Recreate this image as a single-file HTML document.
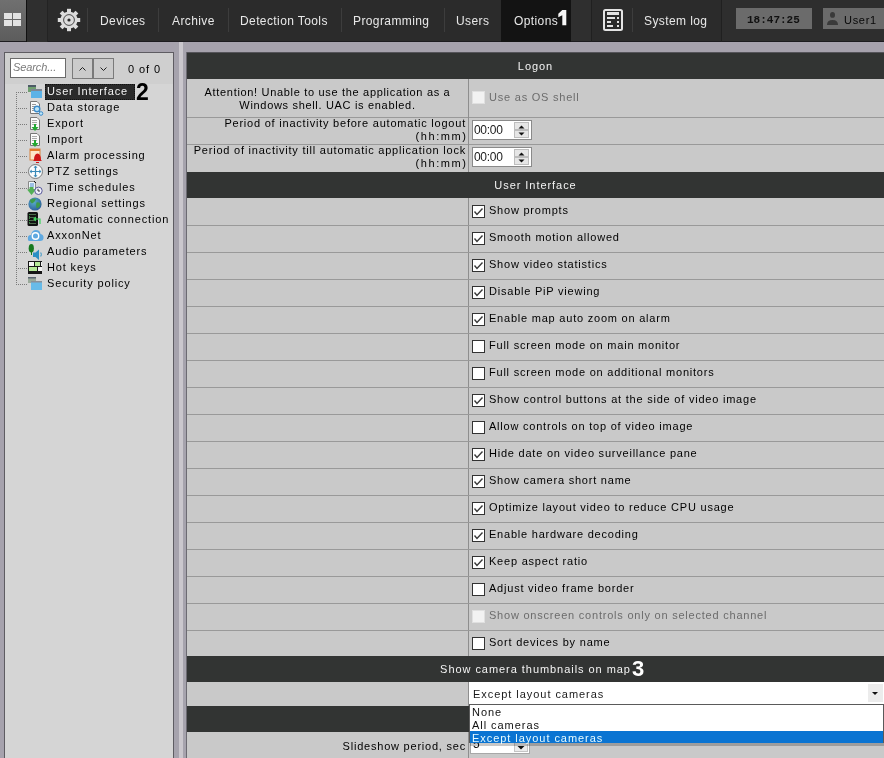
<!DOCTYPE html>
<html><head><meta charset="utf-8">
<style>
*{margin:0;padding:0;box-sizing:border-box}
html,body{-webkit-font-smoothing:antialiased;width:884px;height:758px;overflow:hidden;background:#a6a2ad;font-family:"Liberation Sans",sans-serif;font-size:11px;color:#1a1a1a}
.a{position:absolute}
#top{left:0;top:0;width:884px;height:42px;background:#2b2b2b}
.nav{position:absolute;top:14px;color:#e8e8e8;font-size:12px;white-space:nowrap;letter-spacing:0.4px}
.sep{position:absolute;top:8px;width:1px;height:24px;background:#3d3d3d}
#lp{left:4px;top:52px;width:170px;height:706px;background:#d5d5d5;border:1px solid #5e5c62;border-bottom:none}
#tb{position:absolute;left:0;top:0;width:168px;height:31px;background:#cfcfcf}
.ti{position:absolute;left:42px;height:16px;white-space:nowrap;font-size:11px;line-height:16px;letter-spacing:0.85px;color:#000}
.hd{position:absolute;left:187px;width:697px;background:#323433;color:#f4f4f4;text-align:center;font-size:11px;letter-spacing:0.95px}
.hl{position:absolute;left:187px;width:697px;height:1px;background:#999}
.vl{position:absolute;left:468px;width:1px;background:#8e8e8e}
.cb{position:absolute;left:472px;width:13px;height:13px;background:#fff;border:1px solid #333}
.ck{position:absolute;left:-1px;top:-1px}
.cbd{position:absolute;left:472px;width:13px;height:13px;background:#f2f2f2;border:1px solid #e0e0e0}
.l2{position:absolute;white-space:nowrap;letter-spacing:0.78px;font-size:11px;line-height:13px;color:#000}
.lb{position:absolute;left:489px;white-space:nowrap;letter-spacing:0.78px;font-size:11px;line-height:13px;color:#000}
</style></head><body><div id="wrap" style="position:absolute;left:0;top:0;width:884px;height:758px;will-change:transform">
<div id="top" class="a">
 <div class="a" style="left:0;top:0;width:26px;height:42px;background:linear-gradient(#707070,#5c5c5c)"></div>
 <div class="a" style="left:0;top:41px;width:884px;height:1px;background:#1d1c20"></div>
 <div class="a" style="left:26px;top:0;width:1px;height:42px;background:#111"></div>
 <div class="a" style="left:27px;top:0;width:20px;height:42px;background:#2f2f2f"></div>
 <div class="a" style="left:47px;top:0;width:1px;height:42px;background:#232323"></div>
 <div class="a" style="left:4px;top:13px;width:8px;height:6px;background:#e2e2e2"></div>
 <div class="a" style="left:13px;top:13px;width:8px;height:6px;background:#e2e2e2"></div>
 <div class="a" style="left:4px;top:20px;width:8px;height:6px;background:#e2e2e2"></div>
 <div class="a" style="left:13px;top:20px;width:8px;height:6px;background:#e2e2e2"></div>
 <svg class="a" style="left:56px;top:7px" width="26" height="26" viewBox="-13 -13 26 26">
  <g fill="#dcdcdc">
   <circle r="8.6"/>
   <rect x="-2" y="-11.2" width="4" height="22.4"/>
   <rect x="-2" y="-11.2" width="4" height="22.4" transform="rotate(45)"/>
   <rect x="-2" y="-11.2" width="4" height="22.4" transform="rotate(90)"/>
   <rect x="-2" y="-11.2" width="4" height="22.4" transform="rotate(135)"/>
  </g>
  <circle r="5.4" fill="none" stroke="#3a3a3a" stroke-width="0.9"/>
  <circle r="1.6" fill="#2a2a2a"/>
 </svg>
 <div class="sep" style="left:87px"></div>
 <div class="nav" style="left:100px">Devices</div>
 <div class="sep" style="left:158px"></div>
 <div class="nav" style="left:172px">Archive</div>
 <div class="sep" style="left:228px"></div>
 <div class="nav" style="left:240px">Detection Tools</div>
 <div class="sep" style="left:341px"></div>
 <div class="nav" style="left:353px">Programming</div>
 <div class="sep" style="left:444px"></div>
 <div class="nav" style="left:456px">Users</div>
 <div class="a" style="left:501px;top:0;width:70px;height:42px;background:#131313"></div>
 <div class="nav" style="left:514px">Options</div>
 <svg class="a" style="left:555px;top:5px" width="15" height="25"><path d="M7.3 5 H11.3 V20.2 H7.3 V10.3 L3.3 12.2 V8.7 Z" fill="#f6f6f6"/></svg>
 <div class="a" style="left:571px;top:0;width:20px;height:41px;background:#2f2f2f"></div>
 <div class="a" style="left:591px;top:0;width:1px;height:42px;background:#202020"></div>
 <svg class="a" style="left:603px;top:9px" width="21" height="23">
  <rect x="1" y="1" width="18" height="20" rx="1.5" fill="none" stroke="#e4e4e4" stroke-width="2"/>
  <g fill="#e4e4e4"><rect x="4" y="3" width="12" height="3"/><rect x="4" y="8" width="8" height="2"/><rect x="14" y="8" width="2" height="2"/>
  <rect x="4" y="12" width="4" height="2"/><rect x="14" y="12" width="2" height="2"/><rect x="4" y="16" width="6" height="2"/><rect x="14" y="16" width="2" height="2"/></g>
 </svg>
 <div class="sep" style="left:632px"></div>
 <div class="nav" style="left:644px">System log</div>
 <div class="a" style="left:722px;top:0;width:162px;height:41px;background:#2e2e2e"></div>
 <div class="a" style="left:721px;top:0;width:1px;height:42px;background:#202020"></div>
 <div class="a" style="left:736px;top:8px;width:76px;height:21px;background:#6b6b6b"></div>
 <div class="a" style="left:747px;top:14px;font-family:'Liberation Mono',monospace;font-size:11px;font-weight:bold;color:#111">18:47:25</div>
 <div class="a" style="left:823px;top:8px;width:61px;height:21px;background:#6b6b6b"></div>
 <svg class="a" style="left:823px;top:8px" width="20" height="21"><ellipse cx="9.5" cy="6.9" rx="2.5" ry="2.9" fill="#3a3a3a"/><path d="M4 17 Q4 12 9.5 12 Q15 12 15 17 Z" fill="#3a3a3a"/></svg>
 <div class="a" style="left:844px;top:14px;font-size:11px;color:#080808;letter-spacing:0.7px">User1</div>
</div>
<div id="lp" class="a">
 <div id="tb"></div>
 <div class="a" style="left:5px;top:5px;width:56px;height:20px;background:#fff;border:1px solid #6a6a6a"></div>
 <div class="a" style="left:8px;top:8px;font-style:italic;color:#7a7a7a;font-size:11px;letter-spacing:-0.1px">Search...</div>
 <div class="a" style="left:67px;top:5px;width:21px;height:21px;background:#cbcbcb;border:1px solid #7a7a7a"></div>
 <div class="a" style="left:88px;top:5px;width:21px;height:21px;background:#cbcbcb;border:1px solid #7a7a7a"></div>
 <svg class="a" style="left:67px;top:5px" width="42" height="21"><path d="M7.5 12.5 L10.5 9.5 L13.5 12.5" fill="none" stroke="#222" stroke-width="1"/><path d="M28.5 9.5 L31.5 12.5 L34.5 9.5" fill="none" stroke="#222" stroke-width="1"/></svg>
 <div class="a" style="left:123px;top:10px;font-size:11px;color:#000;letter-spacing:0.9px">0 of 0</div>
 <div class="a" style="left:40px;top:31px;width:90px;height:16px;background:#2a2a2a;border:1px dotted #111"></div>
 <div class="a" style="left:131px;top:28px;font-size:23px;font-weight:bold;color:#000;line-height:22px">2</div>
 <div class="ti" style="top:30px;color:#f2f2f2">User Interface</div>
 <div class="ti" style="top:46px;color:#000">Data storage</div>
 <div class="ti" style="top:62px;color:#000">Export</div>
 <div class="ti" style="top:78px;color:#000">Import</div>
 <div class="ti" style="top:94px;color:#000">Alarm processing</div>
 <div class="ti" style="top:110px;color:#000">PTZ settings</div>
 <div class="ti" style="top:126px;color:#000">Time schedules</div>
 <div class="ti" style="top:142px;color:#000">Regional settings</div>
 <div class="ti" style="top:158px;color:#000">Automatic connection</div>
 <div class="ti" style="top:174px;color:#000">AxxonNet</div>
 <div class="ti" style="top:190px;color:#000">Audio parameters</div>
 <div class="ti" style="top:206px;color:#000">Hot keys</div>
 <div class="ti" style="top:222px;color:#000">Security policy</div>
</div>
<svg class="a" style="left:0;top:0" width="180" height="300">
 <g fill="#7a7a7a">
<rect x="16" y="92" width="1" height="1"/><rect x="16" y="94" width="1" height="1"/><rect x="16" y="96" width="1" height="1"/><rect x="16" y="98" width="1" height="1"/><rect x="16" y="100" width="1" height="1"/><rect x="16" y="102" width="1" height="1"/><rect x="16" y="104" width="1" height="1"/><rect x="16" y="106" width="1" height="1"/><rect x="16" y="108" width="1" height="1"/><rect x="16" y="110" width="1" height="1"/><rect x="16" y="112" width="1" height="1"/><rect x="16" y="114" width="1" height="1"/><rect x="16" y="116" width="1" height="1"/><rect x="16" y="118" width="1" height="1"/><rect x="16" y="120" width="1" height="1"/><rect x="16" y="122" width="1" height="1"/><rect x="16" y="124" width="1" height="1"/><rect x="16" y="126" width="1" height="1"/><rect x="16" y="128" width="1" height="1"/><rect x="16" y="130" width="1" height="1"/><rect x="16" y="132" width="1" height="1"/><rect x="16" y="134" width="1" height="1"/><rect x="16" y="136" width="1" height="1"/><rect x="16" y="138" width="1" height="1"/><rect x="16" y="140" width="1" height="1"/><rect x="16" y="142" width="1" height="1"/><rect x="16" y="144" width="1" height="1"/><rect x="16" y="146" width="1" height="1"/><rect x="16" y="148" width="1" height="1"/><rect x="16" y="150" width="1" height="1"/><rect x="16" y="152" width="1" height="1"/><rect x="16" y="154" width="1" height="1"/><rect x="16" y="156" width="1" height="1"/><rect x="16" y="158" width="1" height="1"/><rect x="16" y="160" width="1" height="1"/><rect x="16" y="162" width="1" height="1"/><rect x="16" y="164" width="1" height="1"/><rect x="16" y="166" width="1" height="1"/><rect x="16" y="168" width="1" height="1"/><rect x="16" y="170" width="1" height="1"/><rect x="16" y="172" width="1" height="1"/><rect x="16" y="174" width="1" height="1"/><rect x="16" y="176" width="1" height="1"/><rect x="16" y="178" width="1" height="1"/><rect x="16" y="180" width="1" height="1"/><rect x="16" y="182" width="1" height="1"/><rect x="16" y="184" width="1" height="1"/><rect x="16" y="186" width="1" height="1"/><rect x="16" y="188" width="1" height="1"/><rect x="16" y="190" width="1" height="1"/><rect x="16" y="192" width="1" height="1"/><rect x="16" y="194" width="1" height="1"/><rect x="16" y="196" width="1" height="1"/><rect x="16" y="198" width="1" height="1"/><rect x="16" y="200" width="1" height="1"/><rect x="16" y="202" width="1" height="1"/><rect x="16" y="204" width="1" height="1"/><rect x="16" y="206" width="1" height="1"/><rect x="16" y="208" width="1" height="1"/><rect x="16" y="210" width="1" height="1"/><rect x="16" y="212" width="1" height="1"/><rect x="16" y="214" width="1" height="1"/><rect x="16" y="216" width="1" height="1"/><rect x="16" y="218" width="1" height="1"/><rect x="16" y="220" width="1" height="1"/><rect x="16" y="222" width="1" height="1"/><rect x="16" y="224" width="1" height="1"/><rect x="16" y="226" width="1" height="1"/><rect x="16" y="228" width="1" height="1"/><rect x="16" y="230" width="1" height="1"/><rect x="16" y="232" width="1" height="1"/><rect x="16" y="234" width="1" height="1"/><rect x="16" y="236" width="1" height="1"/><rect x="16" y="238" width="1" height="1"/><rect x="16" y="240" width="1" height="1"/><rect x="16" y="242" width="1" height="1"/><rect x="16" y="244" width="1" height="1"/><rect x="16" y="246" width="1" height="1"/><rect x="16" y="248" width="1" height="1"/><rect x="16" y="250" width="1" height="1"/><rect x="16" y="252" width="1" height="1"/><rect x="16" y="254" width="1" height="1"/><rect x="16" y="256" width="1" height="1"/><rect x="16" y="258" width="1" height="1"/><rect x="16" y="260" width="1" height="1"/><rect x="16" y="262" width="1" height="1"/><rect x="16" y="264" width="1" height="1"/><rect x="16" y="266" width="1" height="1"/><rect x="16" y="268" width="1" height="1"/><rect x="16" y="270" width="1" height="1"/><rect x="16" y="272" width="1" height="1"/><rect x="16" y="274" width="1" height="1"/><rect x="16" y="276" width="1" height="1"/><rect x="16" y="278" width="1" height="1"/><rect x="16" y="280" width="1" height="1"/><rect x="16" y="282" width="1" height="1"/><rect x="16" y="284" width="1" height="1"/><rect x="18" y="92" width="1" height="1"/><rect x="20" y="92" width="1" height="1"/><rect x="22" y="92" width="1" height="1"/><rect x="24" y="92" width="1" height="1"/><rect x="26" y="92" width="1" height="1"/><rect x="18" y="108" width="1" height="1"/><rect x="20" y="108" width="1" height="1"/><rect x="22" y="108" width="1" height="1"/><rect x="24" y="108" width="1" height="1"/><rect x="26" y="108" width="1" height="1"/><rect x="18" y="124" width="1" height="1"/><rect x="20" y="124" width="1" height="1"/><rect x="22" y="124" width="1" height="1"/><rect x="24" y="124" width="1" height="1"/><rect x="26" y="124" width="1" height="1"/><rect x="18" y="140" width="1" height="1"/><rect x="20" y="140" width="1" height="1"/><rect x="22" y="140" width="1" height="1"/><rect x="24" y="140" width="1" height="1"/><rect x="26" y="140" width="1" height="1"/><rect x="18" y="156" width="1" height="1"/><rect x="20" y="156" width="1" height="1"/><rect x="22" y="156" width="1" height="1"/><rect x="24" y="156" width="1" height="1"/><rect x="26" y="156" width="1" height="1"/><rect x="18" y="172" width="1" height="1"/><rect x="20" y="172" width="1" height="1"/><rect x="22" y="172" width="1" height="1"/><rect x="24" y="172" width="1" height="1"/><rect x="26" y="172" width="1" height="1"/><rect x="18" y="188" width="1" height="1"/><rect x="20" y="188" width="1" height="1"/><rect x="22" y="188" width="1" height="1"/><rect x="24" y="188" width="1" height="1"/><rect x="26" y="188" width="1" height="1"/><rect x="18" y="204" width="1" height="1"/><rect x="20" y="204" width="1" height="1"/><rect x="22" y="204" width="1" height="1"/><rect x="24" y="204" width="1" height="1"/><rect x="26" y="204" width="1" height="1"/><rect x="18" y="220" width="1" height="1"/><rect x="20" y="220" width="1" height="1"/><rect x="22" y="220" width="1" height="1"/><rect x="24" y="220" width="1" height="1"/><rect x="26" y="220" width="1" height="1"/><rect x="18" y="236" width="1" height="1"/><rect x="20" y="236" width="1" height="1"/><rect x="22" y="236" width="1" height="1"/><rect x="24" y="236" width="1" height="1"/><rect x="26" y="236" width="1" height="1"/><rect x="18" y="252" width="1" height="1"/><rect x="20" y="252" width="1" height="1"/><rect x="22" y="252" width="1" height="1"/><rect x="24" y="252" width="1" height="1"/><rect x="26" y="252" width="1" height="1"/><rect x="18" y="268" width="1" height="1"/><rect x="20" y="268" width="1" height="1"/><rect x="22" y="268" width="1" height="1"/><rect x="24" y="268" width="1" height="1"/><rect x="26" y="268" width="1" height="1"/><rect x="18" y="284" width="1" height="1"/><rect x="20" y="284" width="1" height="1"/><rect x="22" y="284" width="1" height="1"/><rect x="24" y="284" width="1" height="1"/><rect x="26" y="284" width="1" height="1"/>
 </g>

 <!-- 1 user interface -->
 <rect x="28" y="85" width="8" height="7" fill="#6f9f6f"/><rect x="28" y="85" width="8" height="2" fill="#4d5a66"/>
 <rect x="31" y="89" width="11" height="9" fill="#5cb2e6"/><rect x="31" y="89" width="11" height="2" fill="#7d8592"/>
 <!-- 2 data storage -->
 <path d="M30.5 101.5 H37 L39.5 104 V113.5 H30.5 Z" fill="#fafafa" stroke="#777"/>
 <path d="M32 104.5h4M32 106.5h4M32 108.5h3M32 110.5h3" stroke="#999" stroke-width="1"/>
 <circle cx="37" cy="109" r="2.8" fill="#bfe6f8" stroke="#3b8ccc" stroke-width="1.4"/>
 <circle cx="41" cy="113.5" r="1.8" fill="#bfe6f8" stroke="#3b8ccc" stroke-width="1"/>
 <!-- 3 export -->
 <path d="M30.5 117.5 H37 L39.5 120 V129.5 H30.5 Z" fill="#fafafa" stroke="#777"/>
 <path d="M32 120.5h5M32 122.5h5M32 124.5h5" stroke="#aaa" stroke-width="1"/>
 <path d="M34 124 h2 v3 h2.5 l-3.5 4 l-3.5 -4 h2.5z" fill="#22a832"/>
 <!-- 4 import -->
 <path d="M30.5 133.5 H37 L39.5 136 V145.5 H30.5 Z" fill="#fafafa" stroke="#777"/>
 <path d="M32 136.5h5M32 138.5h5M32 140.5h5" stroke="#aaa" stroke-width="1"/>
 <path d="M34 140 h2 v3 h2.5 l-3.5 4 l-3.5 -4 h2.5z" fill="#22a832"/>
 <!-- 5 alarm -->
 <rect x="30" y="149" width="10" height="11" fill="#fde7c8" stroke="#d9823c" stroke-width="1"/>
 <rect x="30" y="149" width="10" height="2" fill="#e07a2a"/>
 <path d="M34 160 Q34 154 37.5 153.5 Q41 154 41 160 L42 161 H33 Z" fill="#d01818"/>
 <rect x="36" y="162" width="3" height="1" fill="#d01818"/>
 <!-- 6 PTZ -->
 <circle cx="35.5" cy="171.5" r="7" fill="#fafcfd" stroke="#7a7a7a" stroke-width="1"/>
 <path d="M35.5 166.5v10M30.5 171.5h10" stroke="#3a8ab8" stroke-width="1.2"/>
 <path d="M35.5 165.5l-2 2.2h4zM35.5 177.5l-2 -2.2h4zM29.5 171.5l2.2 -2v4zM41.5 171.5l-2.2 -2v4z" fill="#3a8ab8"/>
 <!-- 7 time schedules -->
 <path d="M28.5 181.5 H34 L35.5 183 V189.5 H28.5 Z" fill="#eef6fa" stroke="#8a8a8a"/>
 <path d="M34 181 L36 183" stroke="#111" stroke-width="1"/>
 <path d="M30 184h4M30 186h4" stroke="#4a8ad0" stroke-width="1"/>
 <path d="M29.5 187 h4 v2.5 h2.5 l-4.5 5.5 l-4.5 -5.5 h2.5z" fill="#52b056"/>
 <circle cx="38.5" cy="190.8" r="3.7" fill="#f0f0fa" stroke="#5a5a9a" stroke-width="1"/>
 <path d="M38 188.8v2.2h2" stroke="#222" stroke-width="0.9" fill="none"/>
 <!-- 8 globe -->
 <defs><radialGradient id="gl" cx="0.4" cy="0.35" r="0.7"><stop offset="0" stop-color="#5ab0c8"/><stop offset="1" stop-color="#2a5a9a"/></radialGradient></defs>
 <circle cx="35" cy="204" r="6.6" fill="url(#gl)"/>
 <path d="M30 200 Q33 197.5 36 199 Q35 202 32 203.5 Q30 203 30 200Z M36.5 202.5 Q39.5 201.5 40.5 204.5 Q39 208.5 36.5 208 Q35.5 205.5 36.5 202.5Z" fill="#3e9a4a"/>
 <!-- 9 automatic connection -->
 <rect x="27.5" y="212" width="10.5" height="14" rx="1.5" fill="#121212"/>
 <path d="M29 214.5h7M29 217.5h7M29 220.5h7M29 223.5h7" stroke="#4a6a4a" stroke-width="1"/>
 <path d="M29.5 214v10" stroke="#3aa84a" stroke-width="0.8" stroke-dasharray="1 1"/>
 <path d="M34 219h6v5" stroke="#3ad25a" stroke-width="1.2" fill="none"/>
 <path d="M33 219l3 -2.5v5z" fill="#3ad25a"/>
 <!-- 10 axxonnet -->
 <path d="M28 240 Q27 235 31 235 Q32 230 36 230 Q40 230 40.5 234 Q44 234.5 43.5 238.5 Q43 241 40 241 H30 Q28 241 28 240Z" fill="#5ea8e0"/>
 <circle cx="35.5" cy="236" r="3.2" fill="none" stroke="#fff" stroke-width="1.4"/>
 <!-- 11 audio -->
 <ellipse cx="31.3" cy="248.3" rx="2.6" ry="4.3" fill="#17791f"/>
 <rect x="31" y="252" width="1" height="3" fill="#17791f"/>
 <path d="M33 252.5 h2.5 l3.5 -3 v10.5 l-3.5 -3 h-2.5z" fill="#2b8fc4"/>
 <path d="M40.8 252.5 q1 2 0 4" stroke="#2b8fc4" stroke-width="1" fill="none"/>
 <!-- 12 hot keys -->
 <rect x="28" y="261" width="14" height="13" fill="#161616"/>
 <rect x="29" y="262" width="5" height="4" fill="#f4f4f4"/><rect x="35" y="262" width="5" height="4" fill="#b6ea98"/><rect x="41" y="262" width="1" height="4" fill="#f4f4f4"/>
 <rect x="29" y="267" width="8" height="4" fill="#b6ea98"/><rect x="38" y="267" width="4" height="4" fill="#f4f4f4"/>
 <!-- 13 security -->
 <rect x="28" y="277" width="8" height="6" fill="#9aaa9a"/><rect x="28" y="277" width="8" height="1.5" fill="#5a6470"/>
 <rect x="31" y="281" width="11" height="9" fill="#68bbe8"/><rect x="31" y="281" width="11" height="1.5" fill="#8a9098"/>
</svg>
<div id="tbl">
<div class="a" style="left:174px;top:42px;width:12px;height:716px;background:#a6a3ad"></div>
<div class="a" style="left:179px;top:42px;width:4px;height:716px;background:#cac7cd"></div>
<div class="a" style="left:186px;top:52px;width:1px;height:706px;background:#6c6a72"></div>
<div class="a" style="left:187px;top:52px;width:697px;height:1px;background:#55545a"></div>
<div class="a" style="left:187px;top:53px;width:697px;height:705px;background:#c9c9c9"></div>
<div class="hd" style="top:53px;height:26px;line-height:26px">Logon</div>
<div class="hl" style="top:117px"></div>
<div class="hl" style="top:144px"></div>
<div class="vl" style="top:79px;height:93px"></div>
<div class="l2" style="left:187px;width:281px;top:86px;text-align:center;letter-spacing:0.68px">Attention! Unable to use the application as a<br>Windows shell. UAC is enabled.</div>
<div class="cbd" style="top:91px"></div>
<div class="lb" style="top:91px;color:#6c6c6c">Use as OS shell</div>
<div class="l2" style="left:187px;width:279px;top:117px;text-align:right">Period of inactivity before automatic logout<br><span style="letter-spacing:1.6px;margin-right:-1.6px">(hh:mm)</span></div>
<div class="l2" style="left:187px;width:279px;top:144px;text-align:right">Period of inactivity till automatic application lock<br><span style="letter-spacing:1.6px;margin-right:-1.6px">(hh:mm)</span></div>
<div class="a" style="left:472px;top:120px;width:60px;height:20px;background:#fff;border:1px solid #8a8a8a"></div>
<div class="a" style="left:474px;top:123px;font-size:12px;line-height:14px;color:#1a1a1a;letter-spacing:-0.3px">00:00</div>
<div class="a" style="left:514px;top:122px;width:15px;height:8px;background:#e6e6e6;border:1px solid #bdbdbd"></div>
<div class="a" style="left:514px;top:130px;width:15px;height:8px;background:#e6e6e6;border:1px solid #bdbdbd"></div>
<svg class="a" style="left:514px;top:122px" width="15" height="16"><path d="M4.5 6.5h6l-3-3z" fill="#111"/><path d="M4.5 10.5h6l-3 3z" fill="#111"/></svg>
<div class="a" style="left:472px;top:147px;width:60px;height:20px;background:#fff;border:1px solid #8a8a8a"></div>
<div class="a" style="left:474px;top:150px;font-size:12px;line-height:14px;color:#1a1a1a;letter-spacing:-0.3px">00:00</div>
<div class="a" style="left:514px;top:149px;width:15px;height:8px;background:#e6e6e6;border:1px solid #bdbdbd"></div>
<div class="a" style="left:514px;top:157px;width:15px;height:8px;background:#e6e6e6;border:1px solid #bdbdbd"></div>
<svg class="a" style="left:514px;top:149px" width="15" height="16"><path d="M4.5 6.5h6l-3-3z" fill="#111"/><path d="M4.5 10.5h6l-3 3z" fill="#111"/></svg>
<div class="hd" style="top:172px;height:26px;line-height:26px">User Interface</div>
<div class="vl" style="top:198px;height:458px"></div>
<div class="hl" style="top:225px"></div>
<div class="cb" style="top:205px"><svg class="ck" width="13" height="13"><path d="M2.5 6.5 L5 9.5 L10.5 3.5" fill="none" stroke="#3a3a3a" stroke-width="1.4"/></svg></div>
<div class="lb" style="top:204px">Show prompts</div>
<div class="hl" style="top:252px"></div>
<div class="cb" style="top:232px"><svg class="ck" width="13" height="13"><path d="M2.5 6.5 L5 9.5 L10.5 3.5" fill="none" stroke="#3a3a3a" stroke-width="1.4"/></svg></div>
<div class="lb" style="top:231px">Smooth motion allowed</div>
<div class="hl" style="top:279px"></div>
<div class="cb" style="top:259px"><svg class="ck" width="13" height="13"><path d="M2.5 6.5 L5 9.5 L10.5 3.5" fill="none" stroke="#3a3a3a" stroke-width="1.4"/></svg></div>
<div class="lb" style="top:258px">Show video statistics</div>
<div class="hl" style="top:306px"></div>
<div class="cb" style="top:286px"><svg class="ck" width="13" height="13"><path d="M2.5 6.5 L5 9.5 L10.5 3.5" fill="none" stroke="#3a3a3a" stroke-width="1.4"/></svg></div>
<div class="lb" style="top:285px">Disable PiP viewing</div>
<div class="hl" style="top:333px"></div>
<div class="cb" style="top:313px"><svg class="ck" width="13" height="13"><path d="M2.5 6.5 L5 9.5 L10.5 3.5" fill="none" stroke="#3a3a3a" stroke-width="1.4"/></svg></div>
<div class="lb" style="top:312px">Enable map auto zoom on alarm</div>
<div class="hl" style="top:360px"></div>
<div class="cb" style="top:340px"></div>
<div class="lb" style="top:339px">Full screen mode on main monitor</div>
<div class="hl" style="top:387px"></div>
<div class="cb" style="top:367px"></div>
<div class="lb" style="top:366px">Full screen mode on additional monitors</div>
<div class="hl" style="top:414px"></div>
<div class="cb" style="top:394px"><svg class="ck" width="13" height="13"><path d="M2.5 6.5 L5 9.5 L10.5 3.5" fill="none" stroke="#3a3a3a" stroke-width="1.4"/></svg></div>
<div class="lb" style="top:393px">Show control buttons at the side of video image</div>
<div class="hl" style="top:441px"></div>
<div class="cb" style="top:421px"></div>
<div class="lb" style="top:420px">Allow controls on top of video image</div>
<div class="hl" style="top:468px"></div>
<div class="cb" style="top:448px"><svg class="ck" width="13" height="13"><path d="M2.5 6.5 L5 9.5 L10.5 3.5" fill="none" stroke="#3a3a3a" stroke-width="1.4"/></svg></div>
<div class="lb" style="top:447px">Hide date on video surveillance pane</div>
<div class="hl" style="top:495px"></div>
<div class="cb" style="top:475px"><svg class="ck" width="13" height="13"><path d="M2.5 6.5 L5 9.5 L10.5 3.5" fill="none" stroke="#3a3a3a" stroke-width="1.4"/></svg></div>
<div class="lb" style="top:474px">Show camera short name</div>
<div class="hl" style="top:522px"></div>
<div class="cb" style="top:502px"><svg class="ck" width="13" height="13"><path d="M2.5 6.5 L5 9.5 L10.5 3.5" fill="none" stroke="#3a3a3a" stroke-width="1.4"/></svg></div>
<div class="lb" style="top:501px">Optimize layout video to reduce CPU usage</div>
<div class="hl" style="top:549px"></div>
<div class="cb" style="top:529px"><svg class="ck" width="13" height="13"><path d="M2.5 6.5 L5 9.5 L10.5 3.5" fill="none" stroke="#3a3a3a" stroke-width="1.4"/></svg></div>
<div class="lb" style="top:528px">Enable hardware decoding</div>
<div class="hl" style="top:576px"></div>
<div class="cb" style="top:556px"><svg class="ck" width="13" height="13"><path d="M2.5 6.5 L5 9.5 L10.5 3.5" fill="none" stroke="#3a3a3a" stroke-width="1.4"/></svg></div>
<div class="lb" style="top:555px">Keep aspect ratio</div>
<div class="hl" style="top:603px"></div>
<div class="cb" style="top:583px"></div>
<div class="lb" style="top:582px">Adjust video frame border</div>
<div class="hl" style="top:630px"></div>
<div class="cbd" style="top:610px"></div>
<div class="lb" style="top:609px;color:#6c6c6c">Show onscreen controls only on selected channel</div>
<div class="cb" style="top:637px"></div>
<div class="lb" style="top:636px">Sort devices by name</div>
<div class="hd" style="top:656px;height:26px;line-height:26px">Show camera thumbnails on map</div>
<div class="vl" style="top:682px;height:24px"></div>
<div class="hd" style="top:706px;height:26px;line-height:26px"></div>
<div class="vl" style="top:732px;height:26px"></div>
<div class="a" style="left:632px;top:658px;font-size:22px;font-weight:bold;color:#fff;line-height:21px">3</div>
<div class="a" style="left:469px;top:682px;width:415px;height:22px;background:#fff"></div>
<div class="a" style="left:473px;top:688px;font-size:11px;line-height:13px;letter-spacing:0.95px;color:#1a1a1a">Except layout cameras</div>
<div class="a" style="left:868px;top:684px;width:15px;height:18px;background:#ececec"></div>
<svg class="a" style="left:868px;top:684px" width="15" height="18"><path d="M4 8h6l-3 3z" fill="#111"/></svg>
<div class="l2" style="left:187px;width:279px;top:740px;text-align:right">Slideshow period, sec</div>
<div class="a" style="left:470px;top:734px;width:60px;height:20px;background:#fff;border:1px solid #a8a8a8"></div>
<div class="a" style="left:473px;top:737px;font-size:12px;line-height:14px;color:#111">5</div>
<div class="a" style="left:514px;top:736px;width:14px;height:16px;background:#ececec;border:1px solid #c4c4c4"></div>
<svg class="a" style="left:514px;top:736px" width="14" height="16"><path d="M3.5 10h7l-3.5 3.5z" fill="#111"/></svg>
<div class="a" style="left:470px;top:743px;width:414px;height:3px;background:rgba(0,0,0,0.22)"></div>
<div class="a" style="left:469px;top:704px;width:415px;height:39px;background:#fff;border:1px solid #5a5a5a;border-bottom:none"></div>
<div class="a" style="left:472px;top:706px;font-size:11px;line-height:13px;letter-spacing:0.95px;color:#111">None<br>All cameras</div>
<div class="a" style="left:470px;top:731px;width:413px;height:12px;background:#0a74d2"></div>
<div class="a" style="left:472px;top:732px;font-size:11px;line-height:13px;letter-spacing:0.95px;color:#e6fbff">Except layout cameras</div>
</div>
</div></body></html>
